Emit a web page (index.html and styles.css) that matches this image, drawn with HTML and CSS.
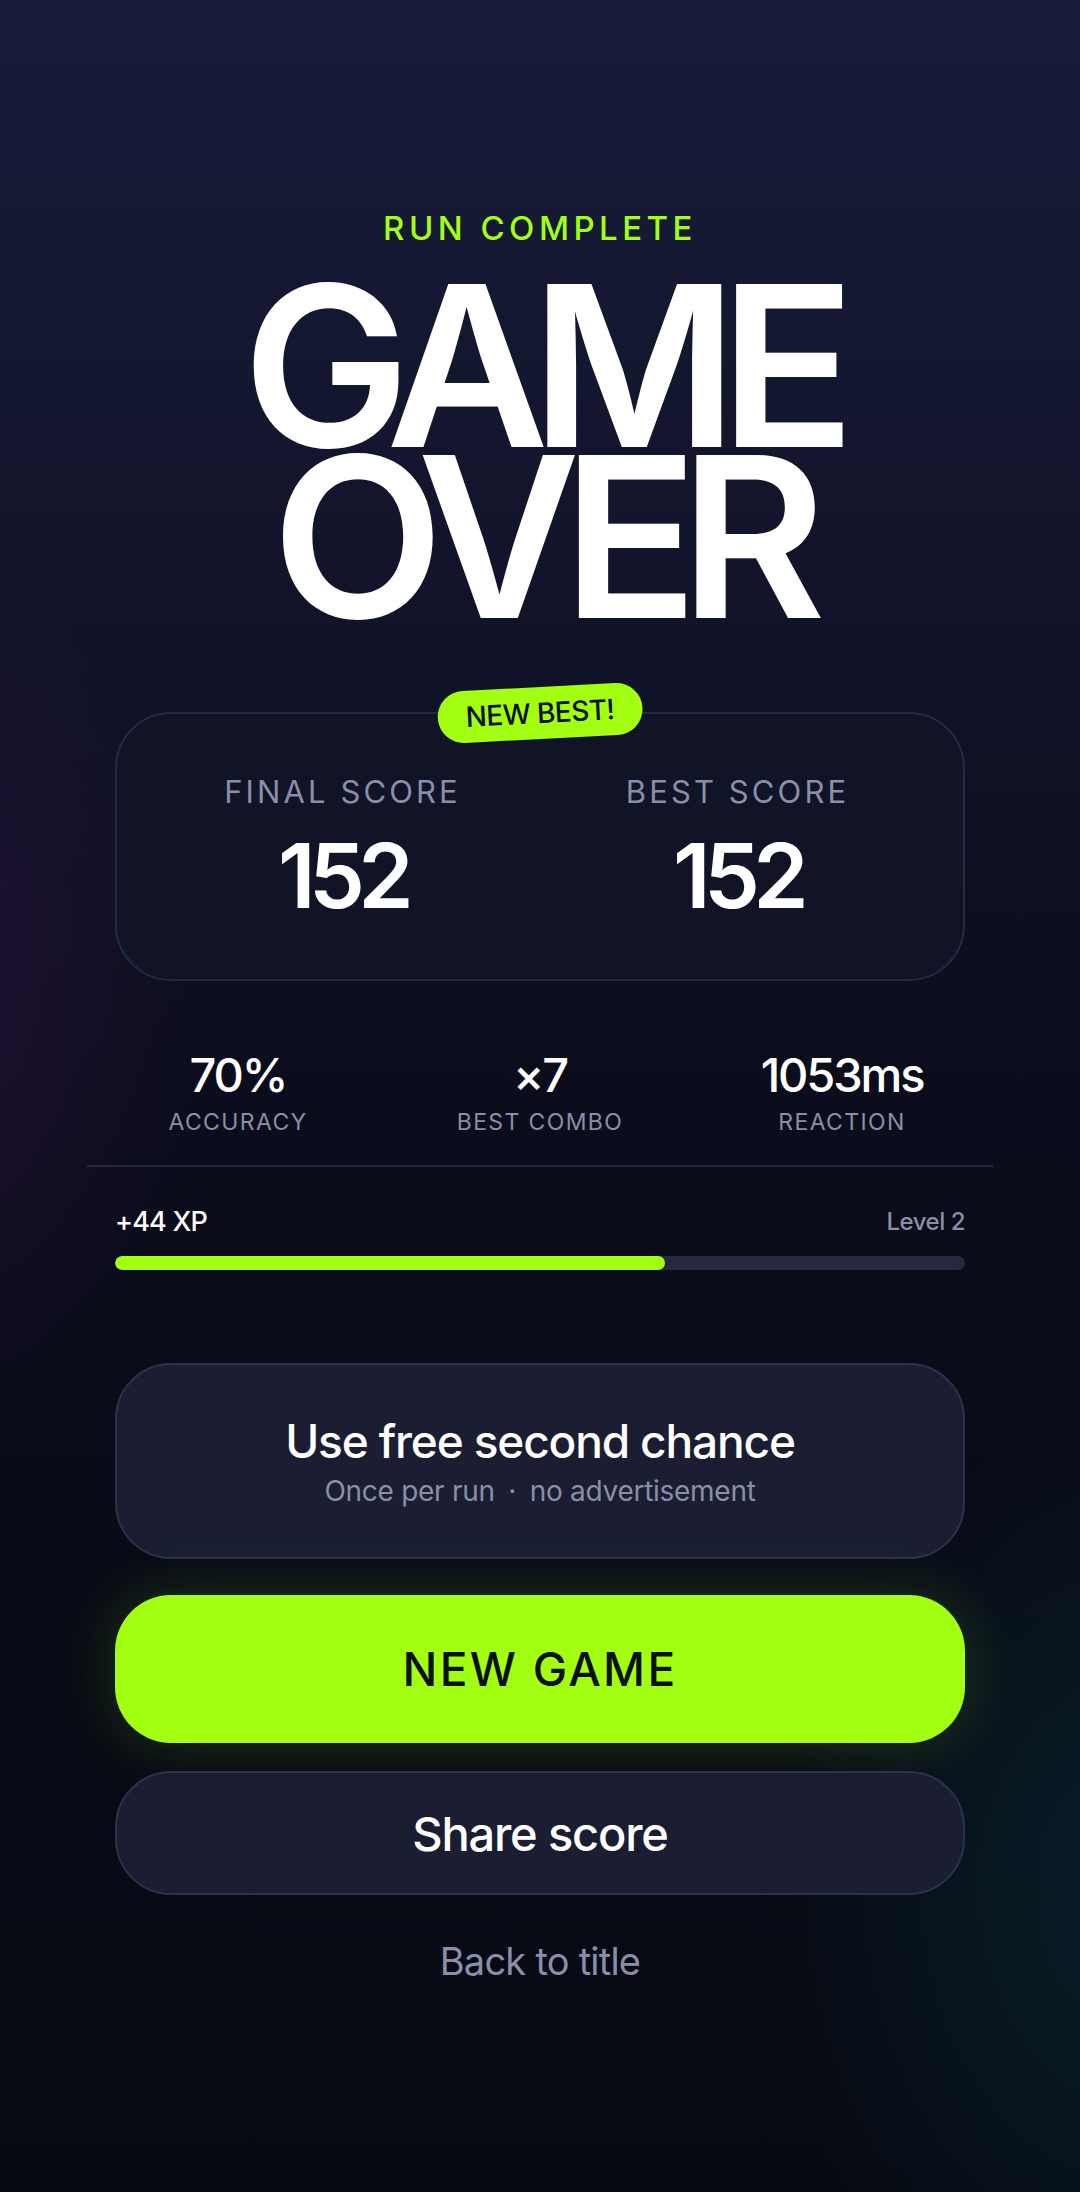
FILE: index.html
```html
<!DOCTYPE html>
<html lang="en">
<head>
<meta charset="utf-8">
<title>Game Over</title>
<link rel="stylesheet" href="styles.css">
</head>
<body>
<main class="screen">
  <p class="eyebrow">RUN COMPLETE</p>
  <h1 class="title">GAME<br>OVER</h1>

  <section class="score-card">
    <span class="badge">NEW BEST!</span>
    <div class="score-col">
      <span class="score-label">FINAL SCORE</span>
      <span class="score-value">152</span>
    </div>
    <div class="score-col">
      <span class="score-label">BEST SCORE</span>
      <span class="score-value">152</span>
    </div>
  </section>

  <section class="stats">
    <div class="stat">
      <span class="stat-value">70%</span>
      <span class="stat-label">ACCURACY</span>
    </div>
    <div class="stat">
      <span class="stat-value">×7</span>
      <span class="stat-label">BEST COMBO</span>
    </div>
    <div class="stat">
      <span class="stat-value">1053ms</span>
      <span class="stat-label">REACTION</span>
    </div>
  </section>

  <section class="xp">
    <div class="xp-row">
      <span class="xp-gain">+44 XP</span>
      <span class="xp-level">Level 2</span>
    </div>
    <div class="xp-track"><div class="xp-fill" style="width:64.7%"></div></div>
  </section>

  <button class="btn btn-chance">
    <span class="chance-title">Use free second chance</span>
    <span class="chance-sub">Once per run <span class="dot">·</span> no advertisement</span>
  </button>
  <button class="btn btn-primary">NEW GAME</button>
  <button class="btn btn-share">Share score</button>
  <a class="back" href="#">Back to title</a>
</main>
</body>
</html>
```

FILE: styles.css
```css
* { box-sizing: border-box; }
html, body { margin: 0; padding: 0; }
body {
  width: 1080px;
  height: 2192px;
  overflow: hidden;
  font-family: Inter, "Noto Sans", sans-serif;
  color: #ffffff;
  background:
    radial-gradient(ellipse 400px 640px at -80px 1000px, rgba(70, 20, 90, 0.35), rgba(70, 20, 90, 0) 70%),
    radial-gradient(ellipse 520px 700px at 1140px 1900px, rgba(10, 60, 70, 0.4), rgba(10, 60, 70, 0) 70%),
    linear-gradient(180deg, #181c3a 0px, #12152c 500px, #0b0d1c 1100px, #080b15 1700px, #070a13 2192px);
}
.screen {
  width: 850px;
  margin: 0 auto;
  padding-top: 208px;
  display: flex;
  flex-direction: column;
  align-items: stretch;
}
.eyebrow {
  margin: 0;
  text-align: center;
  font-size: 33px;
  line-height: 40px;
  font-weight: 500;
  letter-spacing: 0.135em;
  color: #a3ff12;
}
.title {
  margin: 32px 0 0;
  text-align: center;
  font-size: 224px;
  line-height: 171px;
  font-weight: 600;
  letter-spacing: -0.08em;
  color: #ffffff;
}
.score-card {
  position: relative;
  margin-top: 90px;
  height: 269px;
  border: 2px solid #262a40;
  border-radius: 56px;
  background: #111427;
  display: grid;
  grid-template-columns: 1fr 1fr;
  column-gap: 40px;
  padding: 0 48px;
}
.badge {
  position: absolute;
  left: 50%;
  top: -1px;
  transform: translate(-50%, -50%) rotate(-3deg);
  background: #a3ff12;
  color: #0b1008;
  font-size: 28px;
  font-weight: 500;
  letter-spacing: -0.02em;
  line-height: 52px;
  padding: 0 28px;
  border-radius: 26px;
  white-space: nowrap;
}
.score-col {
  display: flex;
  flex-direction: column;
  align-items: center;
  padding-top: 58px;
}
.score-label {
  font-size: 31px;
  line-height: 40px;
  letter-spacing: 0.1em;
  color: #8a8ea9;
  font-weight: 400;
}
.score-value {
  margin-top: 14px;
  font-size: 89px;
  line-height: 100px;
  font-weight: 600;
  letter-spacing: -0.075em;
  color: #ffffff;
}
.stats {
  margin: 66px -28px 0;
  display: grid;
  grid-template-columns: repeat(3, 1fr);
  padding-bottom: 28px;
  border-bottom: 2px solid #262a3d;
}
.stat {
  display: flex;
  flex-direction: column;
  align-items: center;
}
.stat-value {
  font-size: 47px;
  line-height: 56px;
  font-weight: 500;
  letter-spacing: -0.045em;
}
.stat-label {
  margin-top: 4px;
  font-size: 23px;
  line-height: 30px;
  letter-spacing: 0.06em;
  color: #8a8ea9;
}
.xp {
  margin-top: 34px;
}
.xp-row {
  display: flex;
  justify-content: space-between;
  align-items: center;
  height: 40px;
}
.xp-gain {
  font-size: 27px;
  font-weight: 500;
  letter-spacing: -0.03em;
}
.xp-level {
  font-size: 24px;
  color: #8a8ea9;
  letter-spacing: -0.02em;
  font-weight: 500;
}
.xp-track {
  margin-top: 15px;
  height: 14px;
  border-radius: 7px;
  background: #262a3e;
  overflow: hidden;
}
.xp-fill {
  height: 100%;
  border-radius: 7px;
  background: #a3ff12;
}
.btn {
  font-family: inherit;
  display: flex;
  flex-direction: column;
  align-items: center;
  justify-content: center;
  width: 100%;
  border-radius: 56px;
  cursor: pointer;
}
.btn-chance {
  margin-top: 93px;
  height: 196px;
  background: #1b1e33;
  border: 2px solid #2d3149;
  color: #ffffff;
}
.chance-title {
  font-size: 46px;
  line-height: 54px;
  font-weight: 500;
  letter-spacing: -0.025em;
}
.chance-sub {
  margin-top: 6px;
  font-size: 28px;
  line-height: 34px;
  color: #8a8ea9;
  letter-spacing: -0.01em;
}
.dot { padding: 0 6px; }
.btn-primary {
  margin-top: 36px;
  height: 148px;
  background: #a3ff12;
  border: none;
  color: #0b1008;
  font-size: 46px;
  font-weight: 500;
  letter-spacing: 0.05em;
  box-shadow: 0 0 60px rgba(163, 255, 18, 0.16);
}
.btn-share {
  margin-top: 28px;
  height: 124px;
  background: #1b1e33;
  border: 2px solid #2d3149;
  color: #ffffff;
  font-size: 47px;
  font-weight: 500;
  letter-spacing: -0.025em;
}
.back {
  margin-top: 40px;
  align-self: center;
  font-size: 38px;
  line-height: 52px;
  color: #8a8ea9;
  text-decoration: none;
  letter-spacing: -0.02em;
}
```
